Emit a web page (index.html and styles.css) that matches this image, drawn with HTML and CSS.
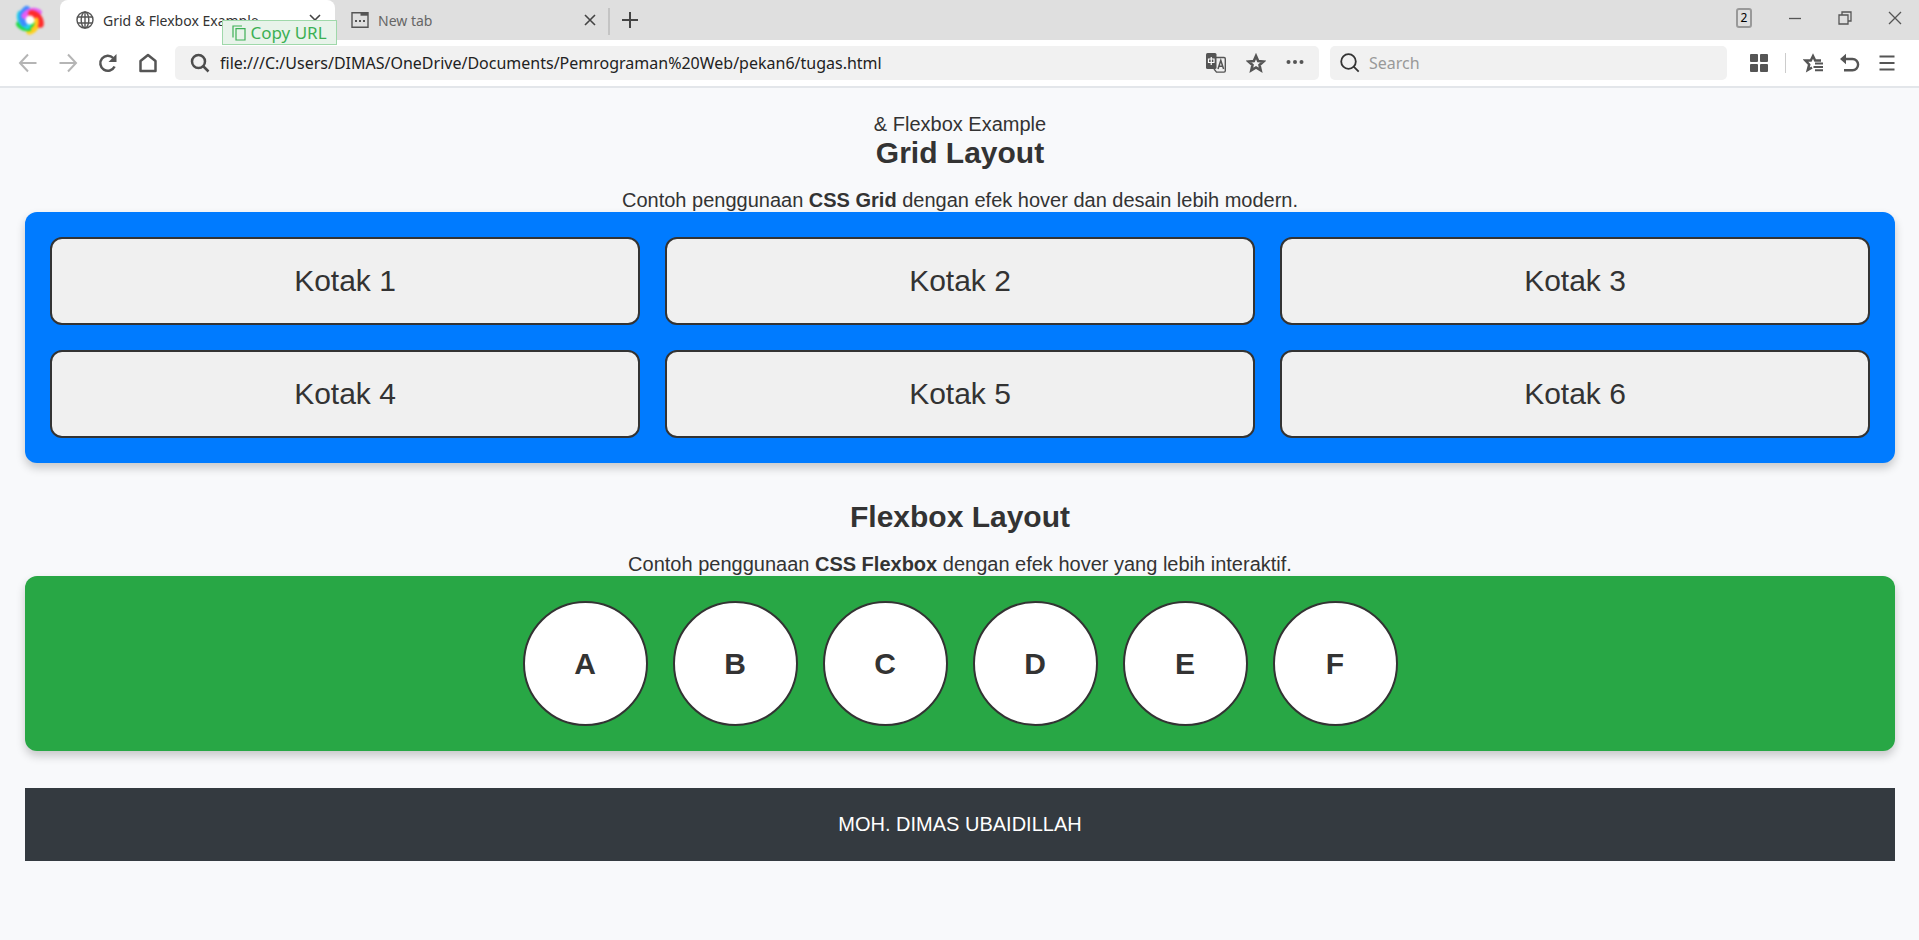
FILE: index.html
```html
<!DOCTYPE html>
<html lang="id">
<head>
<meta charset="utf-8">
<title>Grid &amp; Flexbox Example</title>
<link rel="stylesheet" href="styles.css">
</head>
<body>
<header class="browser">
  <div class="tabbar">
    <div class="logo-cell">
      <svg class="logo" viewBox="0 0 28 28" fill="none" stroke-width="7" stroke-linecap="round">
        <circle cx="14" cy="14" r="6" fill="#fff"/>
        <path d="M14 7.500C19 7 24 10 25 15.500" stroke="#ffd21e" transform="rotate(85 14 14)"/>
        <path d="M14 7.500C19 7 24 10 25 15.500" stroke="#1edb3c" transform="rotate(150 14 14)"/>
        <path d="M14 7.500C19 7 24 10 25 15.500" stroke="#22d0e8" transform="rotate(205 14 14)"/>
        <path d="M14 7.500C19 7 24 10 25 15.500" stroke="#3c8cff" transform="rotate(245 14 14)"/>
        <path d="M14 7.500C19 7 24 10 25 15.500" stroke="#e65cf5" transform="rotate(310 14 14)"/>
        <path d="M14 7.500C19 7 24 10 25 15.500" stroke="#ff2a2a" transform="rotate(15 14 14)"/>
        <path d="M14 7.500C19 7 22 9 23.500 12" stroke="#ffc81e" stroke-width="4" transform="rotate(85 14 14)"/>
        <circle cx="14" cy="14" r="4.500" fill="#fff"/>
      </svg>
    </div>
    <div class="tab tab-active">
      <svg class="icon-18" viewBox="0 0 18 18" fill="none" stroke="#555" stroke-width="1.4"><circle cx="9" cy="9" r="8"/><ellipse cx="9" cy="9" rx="3.8" ry="8"/><path d="M1.8 6h14.4M1.8 12h14.4M9 1v16"/></svg>
      <span class="tab-title">Grid &amp; Flexbox Example</span>
      <button class="icon-btn tab-close" aria-label="Close tab"><svg width="12" height="12" viewBox="0 0 12 12" stroke="#444" stroke-width="1.6"><path d="M1 1l10 10M11 1L1 11"/></svg></button>
      <button class="copy-url"><svg width="14" height="16" viewBox="0 0 14 16" fill="none" stroke="#3cb054" stroke-width="1.2"><path d="M1 12.500V1h9M4 3.600h9v11.400H4z"/></svg>Copy URL</button>
    </div>
    <div class="tab">
      <svg class="icon-18" viewBox="0 0 18 18" fill="none" stroke="#555" stroke-width="1.4"><path d="M1 1.700h16v14.600H1z"/><path d="M9.500 3.200H17" stroke-width="3"/><path d="M4 10h2M8 10h2M12 10h2" stroke-width="2"/></svg>
      <span class="tab-title muted">New tab</span>
      <button class="icon-btn tab-close" aria-label="Close tab"><svg width="12" height="12" viewBox="0 0 12 12" stroke="#444" stroke-width="1.6"><path d="M1 1l10 10M11 1L1 11"/></svg></button>
    </div>
    <button class="icon-btn new-tab" aria-label="New tab"><svg width="16" height="16" viewBox="0 0 16 16" stroke="#444" stroke-width="2"><path d="M8 0v16M0 8h16"/></svg></button>
    <div class="window-controls">
      <button class="counter">2</button>
      <button class="icon-btn" aria-label="Minimize"><svg width="14" height="14" viewBox="0 0 14 14" stroke="#555" stroke-width="1.3"><path d="M1 7.500h12"/></svg></button>
      <button class="icon-btn" aria-label="Restore"><svg width="14" height="14" viewBox="0 0 14 14" fill="none" stroke="#555" stroke-width="1.3"><path d="M1 4h9v9H1zM4 4V1h9v9h-3"/></svg></button>
      <button class="icon-btn" aria-label="Close"><svg width="14" height="14" viewBox="0 0 14 14" stroke="#555" stroke-width="1.3"><path d="M1 1l12 12M13 1L1 13"/></svg></button>
    </div>
  </div>
  <div class="toolbar">
    <div class="nav">
      <button class="icon-btn" aria-label="Back"><svg width="20" height="20" viewBox="0 0 20 20" fill="none" stroke="#b5b5b5" stroke-width="2"><path d="M18.500 10H2M10 1.500L2 10l8 8.500"/></svg></button>
      <button class="icon-btn" aria-label="Forward"><svg width="20" height="20" viewBox="0 0 20 20" fill="none" stroke="#b5b5b5" stroke-width="2"><path d="M1.500 10H18M10 1.500l8 8.500-8 8.500"/></svg></button>
      <button class="icon-btn" aria-label="Reload"><svg width="20" height="20" viewBox="0 0 20 20" fill="none" stroke="#555" stroke-width="2.500"><path d="M16.600 13.500A7.500 7.500 0 1 1 15.200 5"/><path d="M18.500 1v8h-8z" fill="#555" stroke="none"/></svg></button>
      <button class="icon-btn" aria-label="Home"><svg width="20" height="20" viewBox="0 0 20 20" fill="none" stroke="#555" stroke-width="2.500" stroke-linejoin="round"><path d="M2.500 8L10 2l7.500 6v10h-15z"/></svg></button>
    </div>
    <div class="field address">
      <svg width="20" height="20" viewBox="0 0 20 20" fill="none" stroke="#4d4d4d" stroke-width="2.500"><circle cx="8.500" cy="8.500" r="6.500"/><path d="M13 13l5.500 5.500"/></svg>
      <input class="field-input" type="text" aria-label="Address" value="file:///C:/Users/DIMAS/OneDrive/Documents/Pemrograman%20Web/pekan6/tugas.html">
      <button class="icon-btn" aria-label="Translate"><svg width="20" height="20" viewBox="0 0 20 20" fill="none"><path d="M8 4.500h10a1.300 1.300 0 0 1 1.300 1.300v12a1.300 1.300 0 0 1-1.300 1.300H10.500L8 16" stroke="#555" stroke-width="1.400"/><rect x="0" y="0" width="10.500" height="16" rx="1.500" fill="#555"/><path d="M2.500 6h5.500v3.500H2.500zM5.250 4v8" stroke="#fff" stroke-width="1.200"/><path d="M12 16l2.800-8.500L17.600 16M13 13.300h3.600" stroke="#555" stroke-width="1.500"/></svg></button>
      <button class="icon-btn" aria-label="Bookmark"><svg width="20" height="20" viewBox="0 0 20 20" fill="none" stroke="#555" stroke-width="2.600"><path d="M10 3l2.200 5 5.300.5-4 3.500 1.200 5.300-4.700-2.800-4.700 2.800L6.500 12l-4-3.500L7.800 8z"/></svg></button>
      <button class="icon-btn" aria-label="More"><svg width="18" height="20" viewBox="0 0 18 20" fill="#555"><circle cx="2.500" cy="9" r="2"/><circle cx="9" cy="9" r="2"/><circle cx="15.500" cy="9" r="2"/></svg></button>
    </div>
    <div class="field search">
      <svg width="20" height="20" viewBox="0 0 20 20" fill="none" stroke="#333" stroke-width="1.800"><circle cx="8.500" cy="8.500" r="7.300"/><path d="M13.700 13.700l5 5"/></svg>
      <input class="field-input" type="text" aria-label="Search" placeholder="Search">
    </div>
    <div class="tools">
      <button class="icon-btn" aria-label="Apps"><svg width="18" height="18" viewBox="0 0 18 18" fill="#555"><rect width="8" height="8" rx="1"/><rect x="10" width="8" height="8" rx="1"/><rect y="10" width="8" height="8" rx="1"/><rect x="10" y="10" width="8" height="8" rx="1"/></svg></button>
      <span class="divider"></span>
      <button class="icon-btn" aria-label="Favorites"><svg width="20" height="20" viewBox="0 0 20 20" fill="none" stroke="#555" stroke-width="2.500"><path d="M18 7.500h-5.800L10 3 7.800 7.500H2.500l3.700 4L4.800 17 9 14.500"/><path d="M12 10.500h8M10.500 14h9.500M12 17.300h8" stroke-width="2"/></svg></button>
      <button class="icon-btn" aria-label="Undo"><svg width="20" height="20" viewBox="0 0 20 20" fill="none" stroke="#555" stroke-width="2.400"><path d="M4 6h8.500a5.600 5.600 0 0 1 0 11.200H4"/><path d="M6 .8v10.400L0 6z" fill="#555" stroke="none"/></svg></button>
      <button class="icon-btn" aria-label="Menu"><svg width="20" height="18" viewBox="0 0 20 18" stroke="#555" stroke-width="2.200"><path d="M2.500 2.500h15M2.500 9h15M2.500 15.500h15"/></svg></button>
    </div>
  </div>
</header>
<main class="page">
  &amp; Flexbox Example
  <section class="section">
    <h2 class="title">Grid Layout</h2>
    <p class="lead">Contoh penggunaan <strong>CSS Grid</strong> dengan efek hover dan desain lebih modern.</p>
    <div class="panel grid">
      <div class="box">Kotak 1</div>
      <div class="box">Kotak 2</div>
      <div class="box">Kotak 3</div>
      <div class="box">Kotak 4</div>
      <div class="box">Kotak 5</div>
      <div class="box">Kotak 6</div>
    </div>
  </section>
  <section class="section">
    <h2 class="title">Flexbox Layout</h2>
    <p class="lead">Contoh penggunaan <strong>CSS Flexbox</strong> dengan efek hover yang lebih interaktif.</p>
    <div class="panel flex">
      <div class="circle">A</div>
      <div class="circle">B</div>
      <div class="circle">C</div>
      <div class="circle">D</div>
      <div class="circle">E</div>
      <div class="circle">F</div>
    </div>
  </section>
  <footer class="footer">MOH. DIMAS UBAIDILLAH</footer>
</main>
</body>
</html>
```
FILE: styles.css
```css
* {
  box-sizing: border-box;
}

body {
  margin: 0;
  background: #f8f9fb;
  color: #333;
  font-family: "Liberation Sans", Arial, sans-serif;
  font-size: 20px;
  line-height: 23px;
}

button {
  padding: 0;
  border: 0;
  background: none;
  font: inherit;
}

/* Browser frame */
.browser {
  border-bottom: 2px solid #e3e6ea;
  background: #fff;
  font-family: "Noto Sans", "Open Sans", sans-serif;
}

.tabbar {
  display: flex;
  height: 40px;
  background: #dfdfdf;
}

.logo-cell {
  display: grid;
  place-items: center;
  width: 60px;
}

.logo {
  width: 28px;
  height: 28px;
  overflow: visible;
  filter: blur(1px);
}

.tab {
  position: relative;
  display: flex;
  align-items: center;
  gap: 9px;
  width: 275px;
  padding: 0 14px 0 16px;
  font-size: 14px;
}

.tab-active {
  border-radius: 8px 8px 0 0;
  background: #fff;
}

.tab + .tab {
  padding-right: 12px;
  border-right: 2px solid #c4c4c4;
  border-image: linear-gradient(transparent 9px, #c4c4c4 9px, #c4c4c4 34px, transparent 34px) 1;
}

.icon-18 {
  flex: none;
  width: 18px;
  height: 18px;
}

.tab-title {
  flex: 1;
  white-space: nowrap;
}

.muted {
  color: #666;
}

.icon-btn {
  display: grid;
  flex: none;
  place-items: center;
}

.copy-url {
  position: absolute;
  top: 20px;
  right: -2px;
  display: flex;
  align-items: center;
  justify-content: center;
  gap: 4px;
  width: 115px;
  height: 25px;
  border: 1px solid #9fd8aa;
  background: #e8f3ea;
  color: #3cb054;
  font-size: 17px;
}

.new-tab {
  width: 40px;
}

.window-controls {
  display: flex;
  align-items: center;
  gap: 36px;
  margin-left: auto;
  padding: 0 17px 4px;
}

.counter {
  width: 16px;
  height: 20px;
  border: 2px solid #999;
  border-radius: 3px;
  font-size: 12px;
  line-height: 16px;
}

.toolbar {
  display: flex;
  align-items: center;
  height: 46px;
}

.nav {
  display: flex;
  gap: 20px;
  padding: 0 17px 0 18px;
}

.field {
  display: flex;
  align-items: center;
  height: 34px;
  border-radius: 5px;
  background: #f1f1f1;
}

.address {
  flex: 1;
  gap: 20px;
  padding: 0 15px;
}

.search {
  flex: 0 1 397px;
  gap: 9px;
  margin-left: 11px;
  padding: 0 10px;
}

.field-input {
  flex: 1;
  min-width: 0;
  padding: 0;
  border: 0;
  outline: 0;
  background: none;
  color: #222;
  font: inherit;
  font-size: 16px;
}

.address .field-input {
  margin-left: -10px;
}

.field-input::placeholder {
  color: #999;
}

.tools {
  display: flex;
  align-items: center;
  gap: 17px;
  padding: 0 22px 0 23px;
}

.divider {
  width: 1px;
  height: 20px;
  background: #ccc;
}

/* Page content */
.page {
  padding: 25px 24px 25px 25px;
  text-align: center;
}

.section {
  margin-bottom: 37px;
}

.title {
  margin: 0 0 19px;
  font-size: 30px;
  line-height: 34px;
}

.lead {
  margin: 0;
}

.panel {
  gap: 25px;
  padding: 25px;
  border-radius: 12px;
  box-shadow: 0 5px 10px rgba(0, 0, 0, 0.2);
}

.grid {
  display: grid;
  grid-template-columns: repeat(3, 1fr);
  background: #007bff;
}

.box {
  padding: 25px;
  border: 2px solid #333;
  border-radius: 12px;
  background: #f0f0f0;
  font-size: 30px;
  line-height: 34px;
}

.flex {
  display: flex;
  justify-content: center;
  background: #28a745;
}

.circle {
  display: grid;
  place-items: center;
  width: 125px;
  height: 125px;
  border: 2px solid #333;
  border-radius: 50%;
  background: #fff;
  font-size: 30px;
  font-weight: bold;
}

.footer {
  padding: 25px;
  background: #343a40;
  color: #fff;
}
```
